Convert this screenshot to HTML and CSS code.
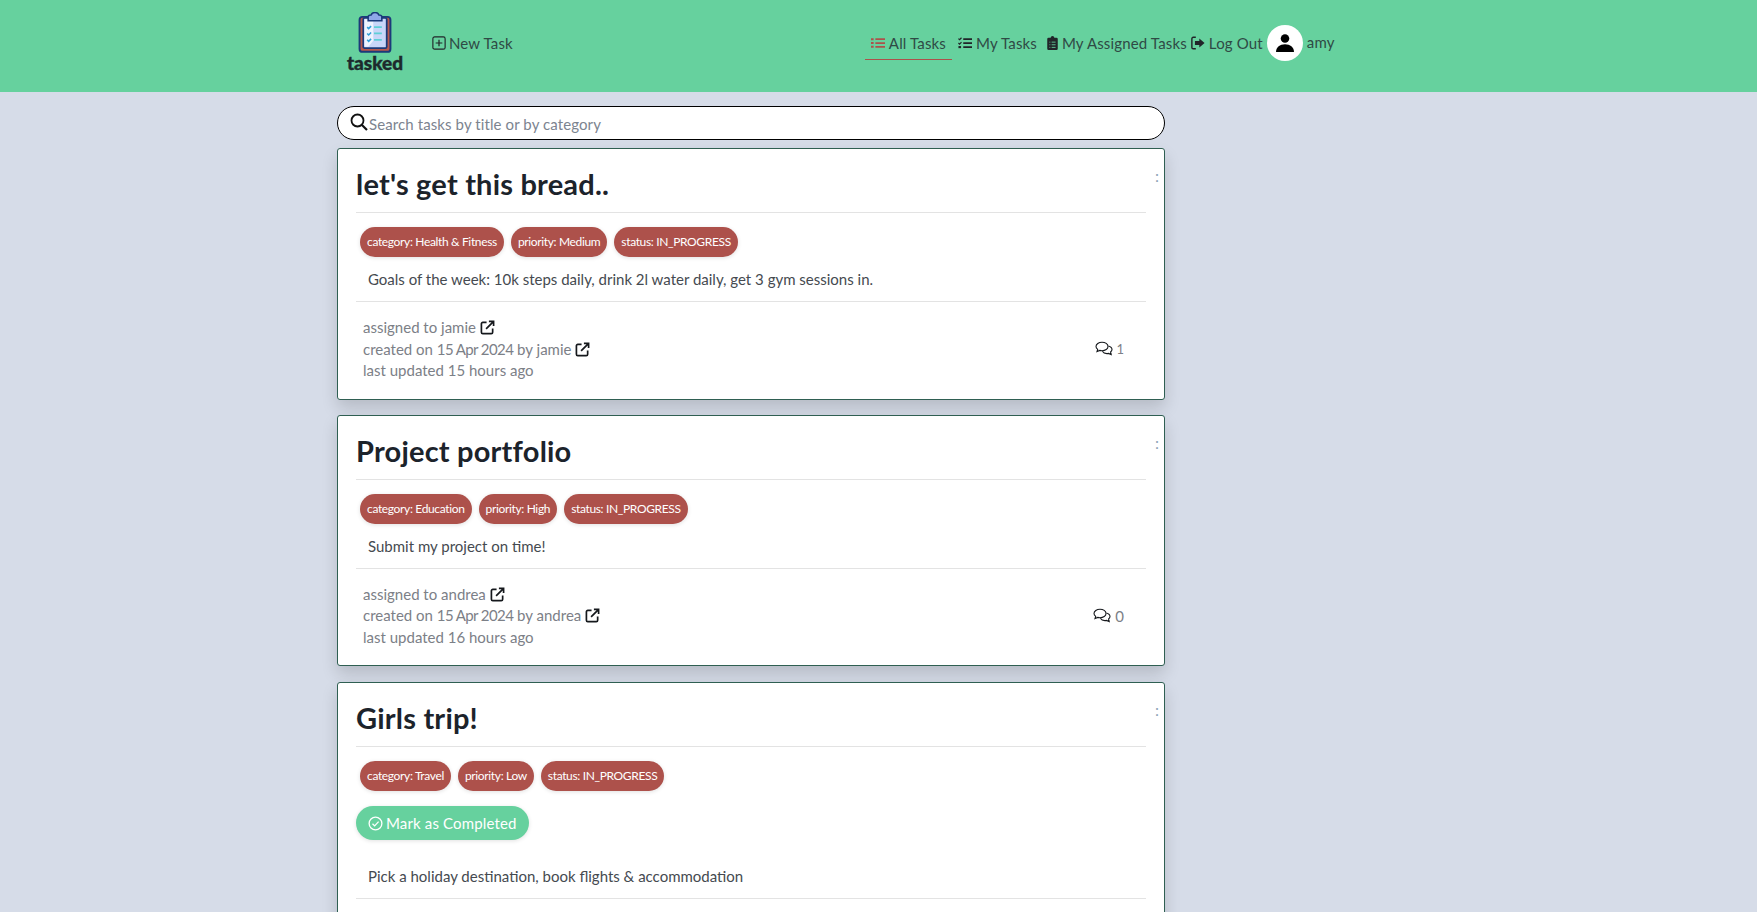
FILE: index.html
```html
<!DOCTYPE html>
<html lang="en">

<head>
  <meta charset="UTF-8">
  <meta name="viewport" content="width=device-width, initial-scale=1.0">
  <title>Tasked</title>
  <link rel="stylesheet" href="styles.css">
</head>

<body>
  <svg class="icon-defs" width="0" height="0">
    <symbol id="ext" viewBox="0 0 16 16">
      <path d="M7 2.500H3A1.500 1.500 0 0 0 1.500 4v9A1.500 1.500 0 0 0 3 14.500h9a1.500 1.500 0 0 0 1.500-1.500V9" fill="none" stroke="currentColor" stroke-width="1.800" />
      <path d="M6.500 9.500 14 2M9.500 1.500h5v5" fill="none" stroke="currentColor" stroke-width="1.800" />
    </symbol>
    <symbol id="chat" viewBox="0 0 18 16">
      <path d="M7 1.200c-3.300 0-6 1.900-6 4.200 0 1.200.7 2.200 1.700 3L2 10.500l2.800-1.100c.7.200 1.400.3 2.200.3 3.300 0 6-1.900 6-4.300S10.300 1.200 7 1.200z" fill="none" stroke="currentColor" stroke-width="1.100" />
      <path d="M13.400 5c2 .5 3.600 1.900 3.600 3.500 0 1-.6 1.900-1.400 2.500l.6 2.500-2.800-1.100c-.5.100-1 .2-1.500.2-2 0-3.700-.9-4.500-2.300" fill="none" stroke="currentColor" stroke-width="1.100" />
    </symbol>
  </svg>

  <!-- top bar -->
  <header class="topbar">
    <div class="brand">
      <svg class="brand-icon" viewBox="0 0 34 42">
        <rect x="1.200" y="5" width="31.600" height="35.800" rx="3" fill="#b9594c" stroke="#1b3a7a" stroke-width="2" />
        <rect x="5" y="6" width="24" height="31" rx="1.500" fill="#c9d6f8" stroke="#1b3a7a" stroke-width="1.800" />
        <path d="M6.200 7.500h9v22l-5 6h-4z" fill="#eef3fe" />
        <path d="M10 5c0-1.500 1-2 3-2 .5-1.500 2.200-2.500 4-2.500s3.500 1 4 2.500c2 0 3 .5 3 2v4H10z" fill="#8fa8e8" stroke="#1b3a7a" stroke-width="1.600" />
        <path d="M9 15.500l1.500 1.500 2.500-2.500M9 22l1.500 1.500 2.500-2.500M9 28.500l1.500 1.500 2.500-2.500" fill="none" stroke="#2f9fd8" stroke-width="1.600" />
        <path d="M16 15.500h8M16 22h8M16 28.500h8" stroke="#5fcfd6" stroke-width="1.800" />
      </svg>
      <span class="brand-name">tasked</span>
    </div>
    <a class="nav-link new-task">
      <svg class="nav-icon" viewBox="0 0 16 16">
        <rect x="1" y="1" width="14" height="14" rx="2" fill="none" stroke="currentColor" stroke-width="1.300" />
        <path d="M8 4.200v7.600M4.200 8h7.600" stroke="currentColor" stroke-width="1.400" />
      </svg>
      New Task
    </a>
    <nav class="nav-right">
      <a class="nav-link active">
        <svg class="nav-icon" viewBox="0 0 16 16">
          <path d="M0 2.500h3v2.400H0zM0 6.800h3v2.400H0zM0 11.100h3v2.400H0z" fill="currentColor" />
          <path d="M5 3.700h11M5 8h11M5 12.300h11" stroke="currentColor" stroke-width="2" />
        </svg>
        All Tasks
      </a>
      <a class="nav-link">
        <svg class="nav-icon" viewBox="0 0 16 16">
          <path d="M.5 3l1.300 1.300L4 2M.5 8l1.300 1.300L4 7" fill="none" stroke="currentColor" stroke-width="1.300" />
          <path d="M.500 11.500h3v2.400h-3z" fill="currentColor" />
          <path d="M6 3.500h10M6 8h10M6 12.700h10" stroke="currentColor" stroke-width="2" />
        </svg>
        My Tasks
      </a>
      <a class="nav-link assigned">
        <svg class="nav-icon clip" viewBox="0 0 12 16">
          <path d="M4 2c0-1 .9-2 2-2s2 1 2 2h2.500A1.500 1.500 0 0 1 12 3.500v11a1.500 1.500 0 0 1-1.500 1.500h-9A1.500 1.500 0 0 1 0 14.500v-11A1.500 1.500 0 0 1 1.500 2z" fill="currentColor" />
          <path d="M2.500 7h1M5 7h4.500M2.500 10h1M5 10h4.500M2.500 13h1M5 13h4.500" stroke="#66d19e" stroke-width="1" />
        </svg>
        My Assigned Tasks
      </a>
      <a class="nav-link logout">
        <svg class="nav-icon" viewBox="0 0 16 16">
          <path d="M5.500 1.500H2.500A1.500 1.500 0 0 0 1 3v10a1.500 1.500 0 0 0 1.500 1.500h3" fill="none" stroke="currentColor" stroke-width="1.600" />
          <path d="M9.500 2.800 15.500 8l-6 5.200V10.300H4.500V5.700h5z" fill="currentColor" />
        </svg>
        Log Out
      </a>
      <span class="avatar">
        <svg viewBox="0 0 16 16" width="18" height="18">
          <circle cx="8" cy="4" r="3.800" fill="#000" />
          <path d="M0 16c0-4.500 3.500-7 8-7s8 2.500 8 7z" fill="#000" />
        </svg>
      </span>
      <span class="username">amy</span>
    </nav>
  </header>

  <main class="content">
    <div class="search">
      <svg class="search-icon" viewBox="0 0 18 18">
        <circle cx="7.500" cy="7.500" r="6" fill="none" stroke="#111" stroke-width="1.800" />
        <path d="M12 12l5 5" stroke="#111" stroke-width="2.200" />
      </svg>
      <input class="search-input" type="text" placeholder="Search tasks by title or by category">
    </div>

    <article class="card">
      <span class="card-menu">:</span>
      <h2 class="card-title">let's get this bread..</h2>
      <div class="badges">
        <span class="badge">category: Health &amp; Fitness</span>
        <span class="badge">priority: Medium</span>
        <span class="badge">status: IN_PROGRESS</span>
      </div>
      <p class="card-text">Goals of the week: 10k steps daily, drink 2l water daily, get 3 gym sessions in.</p>
      <div class="card-foot">
        <div class="meta">
          <div>assigned to jamie <svg class="ext"><use href="#ext" /></svg></div>
          <div>created on <span class="date">15 Apr 2024</span> by jamie <svg class="ext"><use href="#ext" /></svg></div>
          <div>last updated 15 hours ago</div>
        </div>
        <div class="comments"><svg class="chat"><use href="#chat" /></svg> 1</div>
      </div>
    </article>

    <article class="card">
      <span class="card-menu">:</span>
      <h2 class="card-title">Project portfolio</h2>
      <div class="badges">
        <span class="badge">category: Education</span>
        <span class="badge">priority: High</span>
        <span class="badge">status: IN_PROGRESS</span>
      </div>
      <p class="card-text">Submit my project on time!</p>
      <div class="card-foot">
        <div class="meta">
          <div>assigned to andrea <svg class="ext"><use href="#ext" /></svg></div>
          <div>created on <span class="date">15 Apr 2024</span> by andrea <svg class="ext"><use href="#ext" /></svg></div>
          <div>last updated 16 hours ago</div>
        </div>
        <div class="comments wide"><svg class="chat"><use href="#chat" /></svg> 0</div>
      </div>
    </article>

    <article class="card">
      <span class="card-menu">:</span>
      <h2 class="card-title">Girls trip!</h2>
      <div class="badges">
        <span class="badge">category: Travel</span>
        <span class="badge">priority: Low</span>
        <span class="badge">status: IN_PROGRESS</span>
      </div>
      <button class="complete-btn">
        <svg class="check" viewBox="0 0 16 16">
          <circle cx="8" cy="8" r="6.800" fill="none" stroke="currentColor" stroke-width="1.400" />
          <path d="M4.800 8.200l2.300 2.300 4.200-4.500" fill="none" stroke="currentColor" stroke-width="1.400" />
        </svg>
        Mark as Completed
      </button>
      <p class="card-text">Pick a holiday destination, book flights &amp; accommodation</p>
      <div class="card-foot foot-pad"></div>
    </article>
  </main>
</body>

</html>
```

FILE: styles.css
```css
html,
body {
  height: 100%;
}

body {
  margin: 0;
  background-color: #d6dce8;
  color: #212529;
  font-family: Lato, "Open Sans", sans-serif;
  font-size: 15px;
  overflow: hidden;
}

.icon-defs {
  display: block;
  height: 0;
}

.topbar {
  display: flex;
  align-items: center;
  box-sizing: border-box;
  height: 92px;
  padding: 0 0 7px 345px;
  background-color: #66d19e;
}

.brand {
  display: flex;
  flex-direction: column;
  align-items: center;
  width: 60px;
}

.brand-icon {
  width: 34px;
  height: 41px;
}

.brand-name {
  color: #1d2a2c;
  font-size: 19px;
  font-weight: 900;
  line-height: 20px;
  -webkit-text-stroke: 0.4px #1d2a2c;
}

.nav-link {
  display: flex;
  align-items: center;
  gap: 3px;
  color: #2f4a45;
  letter-spacing: 0.15px;
  white-space: nowrap;
}

.new-task {
  margin-left: 27px;
}

.nav-icon {
  width: 14px;
  height: 14px;
  color: #212529;
}

.nav-icon.clip {
  width: 11px;
}

.nav-right {
  display: flex;
  align-items: center;
  margin-left: 352px;
  gap: 1px;
}

.nav-right .nav-link {
  gap: 4px;
  padding: 0 5px;
}

.nav-right .active {
  height: 32px;
  padding: 0 6px;
  border-bottom: 1px solid #ad514b;
  margin-top: 2px;
}

.nav-right .assigned {
  margin-left: -1px;
}

.nav-right .logout {
  margin-left: -7px;
}

.active .nav-icon {
  color: #ad514b;
}

.avatar {
  display: flex;
  align-items: center;
  justify-content: center;
  width: 36px;
  height: 36px;
  border-radius: 50%;
  background-color: #fff;
  margin-left: -2px;
}

.username {
  color: #2f4a45;
  margin-top: -2px;
  margin-left: 3px;
  letter-spacing: 0.2px;
}

.content {
  width: 828px;
  margin-left: 337px;
}

.search {
  display: flex;
  align-items: center;
  height: 32px;
  margin: 14px 0 8px;
  padding-left: 12px;
  border: 1px solid #000;
  border-radius: 17px;
  background-color: #fff;
}

.search-icon {
  width: 18px;
  height: 18px;
  margin-top: -3px;
}

.search-input {
  flex: 1;
  border: none;
  outline: none;
  padding: 2px 0 0 1px;
  background: transparent;
  font-family: inherit;
  font-size: 15px;
  letter-spacing: 0.1px;
}

.search-input::placeholder {
  color: #7c8490;
}

.card {
  position: relative;
  margin-bottom: 15px;
  padding: 0 18px;
  border: 1px solid #2f5f52;
  border-radius: 3px;
  background-color: #fff;
  box-shadow: 0 8px 16px rgba(0, 0, 0, 0.15);
}

.card:last-child {
  margin-top: 16px;
}

.card-menu {
  position: absolute;
  top: 17px;
  right: 5px;
  color: #8fa3b8;
  font-size: 16px;
}

.card-title {
  margin: 0;
  padding: 17px 0 10px;
  border-bottom: 1px solid #e3e3e3;
  color: #1c232b;
  font-size: 29px;
  font-weight: 700;
  letter-spacing: 0.2px;
  line-height: 36px;
}

.badges {
  display: flex;
  gap: 7px;
  margin: 14px 0 0 4px;
}

.badge {
  height: 30px;
  padding: 0 7px;
  border-radius: 15px;
  background-color: #ad514b;
  color: #fff;
  font-size: 12px;
  letter-spacing: -0.35px;
  line-height: 29px;
  box-shadow: 0 1px 4px rgba(0, 0, 0, 0.12);
}

.complete-btn {
  display: flex;
  align-items: center;
  gap: 3px;
  height: 34px;
  margin-top: 15px;
  padding: 0 12px;
  border: none;
  border-radius: 17px;
  background-color: #66d19e;
  color: #fff;
  font-family: inherit;
  font-size: 15px;
  letter-spacing: 0.15px;
  box-shadow: 0 1px 4px rgba(0, 0, 0, 0.12);
}

.check {
  width: 15px;
  height: 15px;
}

.card-text {
  margin: 11px 0 0;
  padding: 0 12px 11px;
  border-bottom: 1px solid #e3e3e3;
  color: #454a50;
  font-size: 15px;
  line-height: 22px;
}

.complete-btn + .card-text {
  margin-top: 25px;
}

.card-foot {
  display: flex;
  align-items: center;
  justify-content: space-between;
  padding: 15px 22px 17px 7px;
}

.foot-pad {
  height: 64px;
}

.meta {
  color: #7c8087;
  font-size: 15px;
  line-height: 21.500px;
}

.date {
  letter-spacing: -0.6px;
}

.ext {
  width: 15px;
  height: 15px;
  color: #15181c;
  vertical-align: -2px;
}

.comments {
  display: flex;
  align-items: center;
  gap: 3px;
  color: #7c8087;
  font-size: 13px;
}

.comments.wide {
  gap: 4px;
  font-size: 15px;
}

.chat {
  width: 18px;
  height: 16px;
  color: #15181c;
}
```
